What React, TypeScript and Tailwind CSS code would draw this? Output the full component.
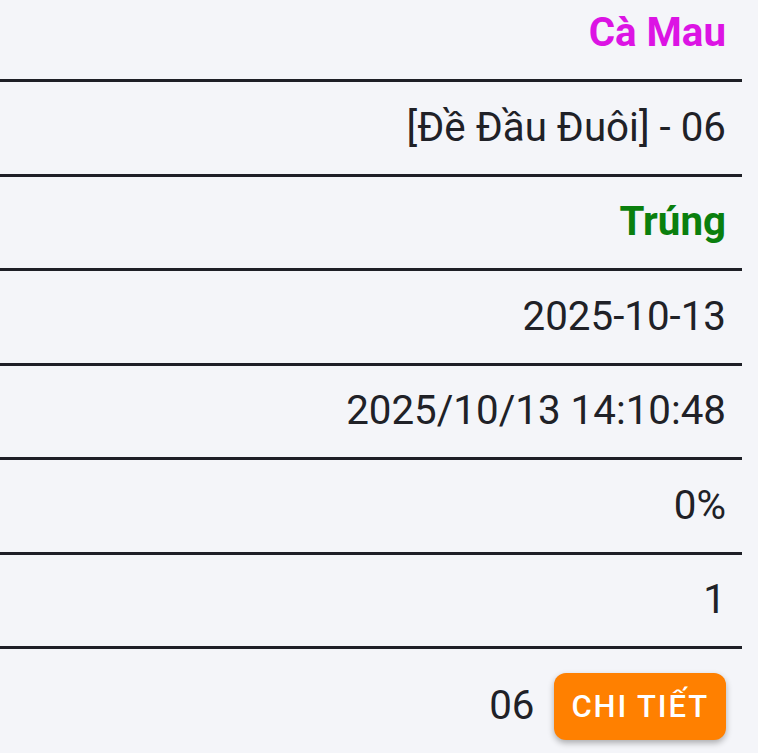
export default function App() {
  const rows: { text: string; cls: string }[] = [
    { text: "Cà Mau", cls: "font-bold text-[#dc14e4]" },
    { text: "[Đề Đầu Đuôi] - 06", cls: "text-[#202127]" },
    { text: "Trúng", cls: "font-bold text-[#0a7f0e]" },
    { text: "2025-10-13", cls: "text-[#202127]" },
    { text: "2025/10/13 14:10:48", cls: "text-[#202127]" },
    { text: "0%", cls: "text-[#202127]" },
    { text: "1", cls: "text-[#202127]" },
  ];

  return (
    <div
      className="h-[753px] w-[758px] overflow-hidden bg-[#f4f5f9] pr-4"
      style={{ fontFamily: "Roboto, 'Noto Sans', sans-serif" }}
    >
      <div className="-mt-[12.5px] flex flex-col">
        {rows.map((r, i) => (
          <div
            key={i}
            className="flex h-[94.5px] shrink-0 items-center justify-end border-b-[3px] border-[#1e1f26] pr-4"
          >
            <span className={`text-[40.3px] leading-none ${r.cls}`}>{r.text}</span>
          </div>
        ))}
        <div className="flex h-[114px] shrink-0 items-center justify-end gap-[20px] pr-4">
          <span className="text-[40.3px] leading-none text-[#202127]">06</span>
          <button className="flex h-[67px] items-center rounded-[12px] bg-[#ff8000] px-[17px] text-[31px] font-medium uppercase leading-none tracking-[1.9px] text-white shadow-[0_3px_6px_rgba(0,0,0,0.3)]">
            Chi tiết
          </button>
        </div>
      </div>
    </div>
  );
}
